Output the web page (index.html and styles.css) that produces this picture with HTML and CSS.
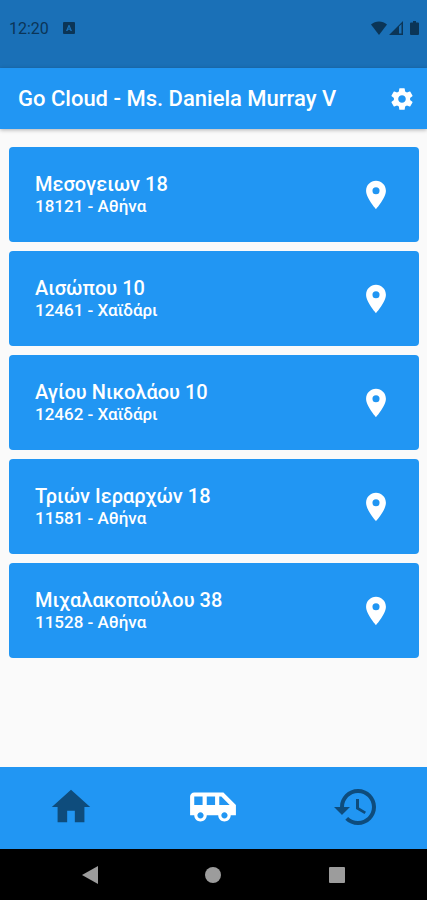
FILE: index.html
```html
<!DOCTYPE html>
<html lang="el">
<head>
    <meta charset="UTF-8">
    <meta name="viewport" content="width=device-width, initial-scale=1.0">
    <title>Go Cloud</title>
    <link rel="stylesheet" href="styles.css">
</head>
<body>
    <svg class="sprite" aria-hidden="true">
        <symbol id="pin" viewBox="0 0 24 24">
            <path d="M12 2C8.13 2 5 5.13 5 9c0 5.25 7 13 7 13s7-7.75 7-13c0-3.87-3.13-7-7-7zm0 9.500a2.500 2.500 0 0 1 0-5 2.500 2.500 0 0 1 0 5z"/>
        </symbol>
    </svg>

    <div class="status-bar">
        <div class="status-left">
            <span>12:20</span>
            <svg width="12" height="12" viewBox="0 0 12 12"><path fill-rule="evenodd" d="M1 0h10a1 1 0 0 1 1 1v10a1 1 0 0 1-1 1H1a1 1 0 0 1-1-1V1a1 1 0 0 1 1-1zm4.500 3L3 9h1.500l.5-1.200h2L7.500 9H9L6.500 3zM6 5l.6 1.700H5.400z"/></svg>
        </div>
        <div class="status-right">
            <svg width="16" height="14" viewBox="0 0 16 14"><path d="M0 3.500C4.500-.5 11.500-.5 16 3.500L8 14z"/></svg>
            <svg width="14" height="14" viewBox="0 0 14 14"><path fill-rule="evenodd" d="M14 0v14H0zM10 5.500V12.500h2.500V3z"/></svg>
            <svg class="battery" width="9" height="14" viewBox="0 0 9 14"><path d="M3 0h3v1.500h2a1 1 0 0 1 1 1V13a1 1 0 0 1-1 1H1a1 1 0 0 1-1-1V2.500a1 1 0 0 1 1-1h2z"/></svg>
        </div>
    </div>

    <header class="app-bar">
        <h1>Go Cloud - Ms. Daniela Murray V</h1>
        <button class="icon-button" aria-label="Ρυθμίσεις">
            <svg width="26" height="26" viewBox="0 0 24 24"><path d="M19.430 12.980c.04-.32.07-.64.07-.98s-.03-.66-.07-.98l2.110-1.650c.19-.15.24-.42.12-.64l-2-3.460c-.12-.22-.39-.3-.61-.22l-2.490 1c-.52-.4-1.080-.73-1.690-.98l-.38-2.650C14.460 2.180 14.250 2 14 2h-4c-.25 0-.46.18-.49.42l-.38 2.650c-.61.25-1.170.59-1.690.98l-2.490-1c-.23-.09-.49 0-.61.22l-2 3.460c-.13.22-.07.49.12.64l2.110 1.650c-.04.32-.07.65-.07.98s.03.66.07.98l-2.110 1.650c-.19.15-.24.42-.12.64l2 3.460c.12.22.39.3.61.22l2.490-1c.52.4 1.080.73 1.690.98l.38 2.650c.03.24.24.42.49.42h4c.25 0 .46-.18.49-.42l.38-2.650c.61-.25 1.170-.59 1.690-.98l2.490 1c.23.09.49 0 .61-.22l2-3.460c.12-.22.07-.49-.12-.64l-2.110-1.650zM12 15.500c-1.930 0-3.500-1.570-3.500-3.500s1.570-3.500 3.500-3.500 3.500 1.570 3.500 3.500-1.570 3.500-3.500 3.500z"/></svg>
        </button>
    </header>

    <main class="stops">
        <button class="stop">
            <span class="stop-text"><span class="street">Μεσογειων 18</span><span class="area">18121 - Αθήνα</span></span>
            <svg class="pin"><use href="#pin"/></svg>
        </button>
        <button class="stop">
            <span class="stop-text"><span class="street">Αισώπου 10</span><span class="area">12461 - Χαϊδάρι</span></span>
            <svg class="pin"><use href="#pin"/></svg>
        </button>
        <button class="stop">
            <span class="stop-text"><span class="street">Αγίου Νικολάου 10</span><span class="area">12462 - Χαϊδάρι</span></span>
            <svg class="pin"><use href="#pin"/></svg>
        </button>
        <button class="stop">
            <span class="stop-text"><span class="street">Τριών Ιεραρχών 18</span><span class="area">11581 - Αθήνα</span></span>
            <svg class="pin"><use href="#pin"/></svg>
        </button>
        <button class="stop">
            <span class="stop-text"><span class="street">Μιχαλακοπούλου 38</span><span class="area">11528 - Αθήνα</span></span>
            <svg class="pin"><use href="#pin"/></svg>
        </button>
    </main>

    <nav class="tabs">
        <a href="#" aria-label="Αρχική">
            <svg width="46" height="46" viewBox="0 0 24 24"><path d="M10 20v-6h4v6h5v-8h3L12 3 2 12h3v8z"/></svg>
        </a>
        <a href="#" class="active" aria-label="Διαδρομές">
            <svg width="50" height="50" viewBox="0 0 24 24"><path d="M17 5H3c-1.100 0-2 .89-2 2v9h2c0 1.650 1.340 3 3 3s3-1.350 3-3h5.500c0 1.650 1.340 3 3 3s3-1.350 3-3H23v-5l-6-6zM3 11V7h4v4H3zm3 6.500c-.83 0-1.500-.67-1.500-1.500s.67-1.500 1.500-1.500 1.500.67 1.500 1.500-.67 1.500-1.500 1.500zm7-6.500H9V7h4v4zm4.500 6.500c-.83 0-1.500-.67-1.500-1.500s.67-1.500 1.500-1.500 1.500.67 1.500 1.500-.67 1.500-1.500 1.500zM15 11V7h1l4 4h-5z"/></svg>
        </a>
        <a href="#" aria-label="Ιστορικό">
            <svg width="48" height="48" viewBox="0 0 24 24"><path d="M13 3c-4.970 0-9 4.030-9 9H1l3.890 3.890.07.14L9 12H6c0-3.870 3.130-7 7-7s7 3.130 7 7-3.130 7-7 7c-1.930 0-3.680-.79-4.940-2.060l-1.420 1.420C8.270 19.990 10.510 21 13 21c4.970 0 9-4.030 9-9s-4.030-9-9-9zm-1 5v5l4.280 2.540.72-1.210-3.500-2.080V8H12z"/></svg>
        </a>
    </nav>

    <div class="system-nav">
        <button aria-label="Πίσω"><svg width="18" height="18" viewBox="0 0 18 18"><path d="M17 0v18L1 9z"/></svg></button>
        <button aria-label="Αρχική οθόνη"><svg width="18" height="18" viewBox="0 0 18 18"><circle cx="9" cy="9" r="8"/></svg></button>
        <button aria-label="Πρόσφατες εφαρμογές"><svg width="18" height="18" viewBox="0 0 18 18"><rect x="1" y="1" width="16" height="16" rx="1"/></svg></button>
    </div>
</body>
</html>
```
FILE: styles.css
```css
* { box-sizing: border-box; }
body { font-family: Roboto, "Noto Sans", sans-serif; margin: 0; min-height: 100vh; display: flex; flex-direction: column; background-color: #fafafa; }
button { font-family: inherit; border: none; padding: 0; background: none; cursor: pointer; }
svg { display: block; fill: currentColor; }
.sprite { display: none; }

.status-bar { height: 68px; padding: 0 8px 12px 9px; display: flex; justify-content: space-between; align-items: center; background-color: #1a70b7; color: #0b3557; font-size: 16px; }
.status-left { display: flex; align-items: center; gap: 14px; }
.status-right { display: flex; align-items: center; gap: 2px; }
.battery { margin-left: 5px; }

.app-bar { height: 61px; padding: 0 12px 0 18px; display: flex; justify-content: space-between; align-items: center; background-color: #2196f3; color: white; box-shadow: 0 1px 4px rgba(0,0,0,0.3); }
.app-bar h1 { margin: 0; font-size: 22px; font-weight: 500; white-space: nowrap; }
.icon-button { color: white; }

.stops { flex: 1; padding: 18px 8px 18px 9px; display: flex; flex-direction: column; gap: 9px; }
.stop { height: 95px; padding: 0 26px; display: flex; justify-content: space-between; align-items: center; background-color: #2196f3; color: white; border-radius: 4px; text-align: left; }
.stop-text { display: flex; flex-direction: column; font-weight: 500; }
.street { font-size: 20px; line-height: 23px; }
.area { font-size: 17px; line-height: 20px; }
.pin { width: 34px; height: 34px; }

.tabs { height: 82px; display: grid; grid-template-columns: repeat(3, 1fr); background-color: #2196f3; }
.tabs a { display: flex; justify-content: center; align-items: center; padding-bottom: 2px; color: #0e4c7c; }
.tabs a.active { color: white; }

.system-nav { height: 51px; padding: 0 28px; display: grid; grid-template-columns: repeat(3, 1fr); background-color: black; color: #9c9c9c; }
.system-nav button { display: flex; justify-content: center; align-items: center; color: #9c9c9c; }
```
